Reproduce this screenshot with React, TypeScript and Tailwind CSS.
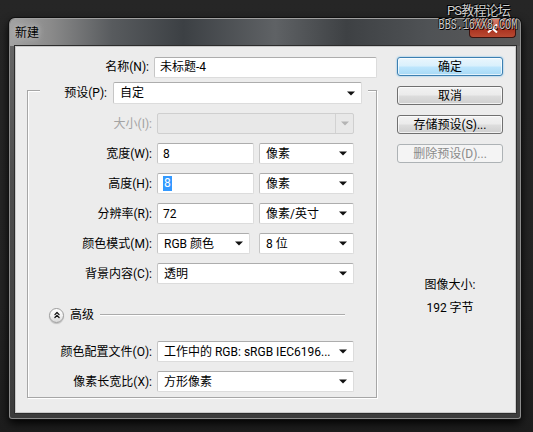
import { ChevronsUp } from "lucide-react";

// Photoshop "新建" dialog

const box =
  "h-[21px] bg-white border border-[#dcdcdc] border-t-[#adadad] border-l-[#c6c6c6] rounded-[2px] flex items-center text-[12px] text-black";

function Caret({ off }: { off?: boolean }) {
  return (
    <svg width="8" height="5" viewBox="0 0 8 5" className="shrink-0">
      <path d="M0 0.5h8L4 4.5z" fill={off ? "#b4b4b4" : "#111"} />
    </svg>
  );
}

function Input({ w, children }: { w: string; children?: React.ReactNode }) {
  return <div className={`${box} ${w} pl-[5px]`}>{children}</div>;
}

function Select({ w, children }: { w: string; children?: React.ReactNode }) {
  return (
    <div className={`${box} ${w} pl-[6px] pr-[6px] justify-between`}>
      <span className="whitespace-nowrap">{children}</span>
      <Caret />
    </div>
  );
}

function Row({ label, off, children, mt = "mt-[9px]" }: { label: string; off?: boolean; children: React.ReactNode; mt?: string }) {
  return (
    <div className={`flex items-center h-[21px] ${mt}`}>
      <div className={`w-[124px] text-right text-[12px] whitespace-nowrap ${off ? "text-[#a3a3a3]" : "text-black"}`}>
        {label}
      </div>
      <div className="ml-[5px] flex">{children}</div>
    </div>
  );
}

const btn = "h-[19px] w-[106px] rounded-[3px] border flex items-center justify-center text-[12px] leading-none";

export default function App() {
  return (
    <div className="relative w-[533px] h-[432px] overflow-hidden bg-[linear-gradient(180deg,#262626_0%,#232323_70%,#1d1d1d_100%)] pt-[18px] pl-[9px] font-[family-name:Roboto,'Noto_Sans_CJK_SC',sans-serif]">
      {/* window */}
      <div className="w-[512px] h-[401px] rounded-t-[6px] rounded-b-[3px] border border-[#8c8c8c] border-t-[#a0a0a0] bg-[linear-gradient(180deg,#6a6a6a_0%,#4e4e4e_40%,#3c3c3c_100%)] shadow-[0_0_0_1px_#101010,0_4px_10px_#000] flex flex-col">
        {/* title bar */}
        <div className="h-[27px] flex items-start justify-between rounded-t-[5px] bg-[linear-gradient(90deg,#a2a2a2_0%,#8a8a8a_8%,#585b5e_20%,#3c4044_34%,#5f6265_52%,#3e4144_66%,#4f5255_82%,#5a5a5a_100%)]">
          <div className="pl-[5px] h-[27px] flex items-center text-[12px] text-black [text-shadow:0_0_6px_#d8d8d8]">新建</div>
          <div className="mr-[4px] w-[47px] h-[19px] rounded-b-[4px] border border-t-0 border-[#3b1410] bg-[linear-gradient(180deg,#d9806f_0%,#c25a47_48%,#a9301d_52%,#b94a33_100%)] flex items-center justify-center">
            <svg width="11" height="9" viewBox="0 0 11 9">
              <path d="M1 0.5l9 8M10 0.5l-9 8" stroke="#fff" strokeWidth="2" />
            </svg>
          </div>
        </div>

        {/* client */}
        <div className="ml-[5px] w-[501px] h-[367px] bg-[#ececec] border border-[#c9c9c9] shadow-[0_0_0_1px_#2c2c2c] flex pt-[10px] pl-[11px]">
          {/* left column */}
          <div className="w-[350px] flex flex-col">
            <div className="flex items-center h-[20px]">
              <div className="w-[125px] text-right text-[12px] text-black">名称(N):</div>
              <div className="ml-[5px]">
                <div className={`${box} w-[223px] h-[20px] pl-[5px]`}>未标题-4</div>
              </div>
            </div>

            {/* group box */}
            <div className="mt-[13px] h-[308px] border border-[#a6a6a6] shadow-[inset_1px_1px_0_#fff,1px_1px_0_#fff] flex flex-col">
              <div className="-mt-[9px] ml-[12px] w-[328px] h-[22px] bg-[#ececec] flex items-center">
                <div className="w-[67px] text-right text-[12px] text-black">预设(P):</div>
                <div className={`${box} h-[22px] w-[249px] ml-[6px] pl-[6px] pr-[6px] justify-between`}>
                  <span>自定</span>
                  <Caret />
                </div>
              </div>

              <Row label="大小(I):" off>
                <div className="h-[21px] w-[197px] rounded-[2px] border border-[#cfcfcf] bg-[#e8e8e8] flex justify-end">
                  <div className="h-full w-[18px] border-l border-[#d2d2d2] flex items-center justify-center">
                    <Caret off />
                  </div>
                </div>
              </Row>

              <Row label="宽度(W):">
                <Input w="w-[97px]">8</Input>
                <div className="ml-[5px]">
                  <Select w="w-[95px]">像素</Select>
                </div>
              </Row>

              <Row label="高度(H):">
                <Input w="w-[97px]">
                  <span className="bg-[#3399ff] text-white px-[1px] leading-[15px]">8</span>
                </Input>
                <div className="ml-[5px]">
                  <Select w="w-[95px]">像素</Select>
                </div>
              </Row>

              <Row label="分辨率(R):">
                <Input w="w-[97px]">72</Input>
                <div className="ml-[5px]">
                  <Select w="w-[95px]">像素/英寸</Select>
                </div>
              </Row>

              <Row label="颜色模式(M):">
                <Select w="w-[93px]">RGB 颜色</Select>
                <div className="ml-[9px]">
                  <Select w="w-[95px]">8 位</Select>
                </div>
              </Row>

              <Row label="背景内容(C):">
                <Select w="w-[197px]">透明</Select>
              </Row>

              {/* advanced toggle */}
              <div className="mt-[23px] h-[16px] flex items-center">
                <div className="ml-[21px] w-[15px] h-[15px] rounded-full border border-[#9c9c9c] bg-[linear-gradient(180deg,#ffffff_0%,#f2f2f2_50%,#d9d9d9_100%)] shadow-[0_1px_1px_#0003] flex items-center justify-center">
                  <ChevronsUp size={10} strokeWidth={3} color="#111" />
                </div>
                <div className="ml-[6px] text-[12px] text-black">高级</div>
                <div className="ml-[6px] w-[245px] h-[2px] border-t border-[#ababab] border-b border-b-white" />
              </div>

              <Row label="颜色配置文件(O):" mt="mt-[18px]">
                <Select w="w-[197px]">工作中的 RGB: sRGB IEC6196...</Select>
              </Row>

              <Row label="像素长宽比(X):">
                <Select w="w-[197px]">方形像素</Select>
              </Row>
            </div>
          </div>

          {/* right column */}
          <div className="ml-[20px] w-[106px] flex flex-col items-center">
            <div className={`${btn} border-[#3c7fb1] bg-[linear-gradient(180deg,#eaf6fd_0%,#d9f0fc_48%,#bee6fd_52%,#a7d9f5_100%)] shadow-[inset_0_0_0_1px_#ffffffaa,0_0_2px_#5fb4e8] text-black`}>
              确定
            </div>
            <div className={`${btn} mt-[10px] border-[#707070] bg-[linear-gradient(180deg,#f2f2f2_0%,#ebebeb_48%,#dddddd_52%,#cfcfcf_100%)] shadow-[inset_0_0_0_1px_#ffffffb0] text-black`}>
              取消
            </div>
            <div className={`${btn} mt-[10px] border-[#707070] bg-[linear-gradient(180deg,#f2f2f2_0%,#ebebeb_48%,#dddddd_52%,#cfcfcf_100%)] shadow-[inset_0_0_0_1px_#ffffffb0] text-black`}>
              存储预设(S)...
            </div>
            <div className={`${btn} mt-[10px] border-[#adb2b5] bg-[#f4f4f4] text-[#8a8a8a]`}>
              删除预设(D)...
            </div>

            <div className="mt-[114px] text-[12px] leading-[16px] text-black">图像大小:</div>
            <div className="mt-[7px] text-[12px] leading-[16px] text-black">192 字节</div>
          </div>
        </div>
      </div>

      {/* watermark */}
      <div className="absolute top-[4px] right-[16px] flex flex-col items-end leading-none text-[#cfcfcf] [text-shadow:0_0_1px_#000,1px_1px_0_#000,-1px_-1px_0_#000]">
        <div className="text-[13px] mr-[7px] tracking-[-0.8px]">PS教程论坛</div>
        <div className="mt-[1px] text-[14px] scale-x-[0.72] origin-right font-[family-name:'Liberation_Mono',monospace]">BBS.16XX8.COM</div>
      </div>
    </div>
  );
}
